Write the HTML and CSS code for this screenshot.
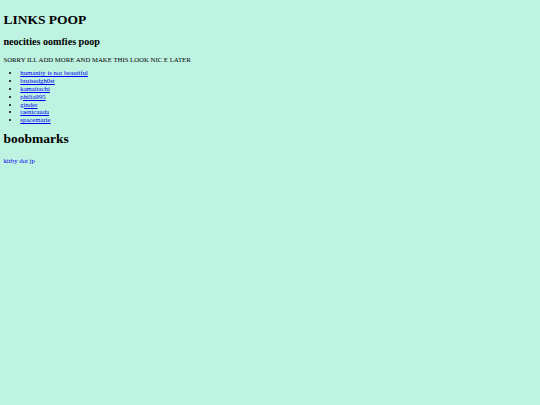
FILE: index.html
```html
<!DOCTYPE html>
<html>
<head>
<meta charset="utf-8">
<title>LINKS POOP</title>
<link rel="stylesheet" href="styles.css">
</head>
<body class="page">
<h1 class="title">LINKS POOP</h1>
<h2 class="subtitle">neocities oomfies poop</h2>
<p class="note">SORRY ILL ADD MORE AND MAKE THIS LOOK NIC E LATER</p>
<ul class="links">
<li><a href="#">humanity is not beautiful</a></li>
<li><a href="#">bruisedgh0st</a></li>
<li><a href="#">kamaitachi</a></li>
<li><a href="#">philia995</a></li>
<li><a href="#">ginder</a></li>
<li><a href="#">taenicauda</a></li>
<li><a href="#">spacemarie</a></li>
</ul>
<h1 class="title title-second">boobmarks</h1>
<p class="note note-last"><a href="#">kirby dot jp</a></p>
</body>
</html>
```
FILE: styles.css
```css
html {
  background: #bff3e1;
}
.page {
  margin: 3.375px;
  font-family: "Liberation Serif", "Times New Roman", serif;
  font-size: 6.75px;
  line-height: 7.77px;
  color: #000;
}
.title {
  font-size: 13.5px;
  line-height: 15.5px;
  font-weight: bold;
  margin: 8.7px 0 0;
}
.title-second {
  margin-top: 7.2px;
}
.subtitle {
  font-size: 10.125px;
  line-height: 11.64px;
  font-weight: bold;
  margin: 8.3px 0 0;
}
.note {
  margin: 8.7px 0 0;
}
.note-last {
  margin-top: 10px;
}
.links {
  margin: 5.5px 0 0;
  padding-left: 16.875px;
}
.page a {
  color: #0000ee;
  text-decoration: underline;
  text-decoration-thickness: 1.2px;
  text-underline-offset: 0.6px;
}
```
